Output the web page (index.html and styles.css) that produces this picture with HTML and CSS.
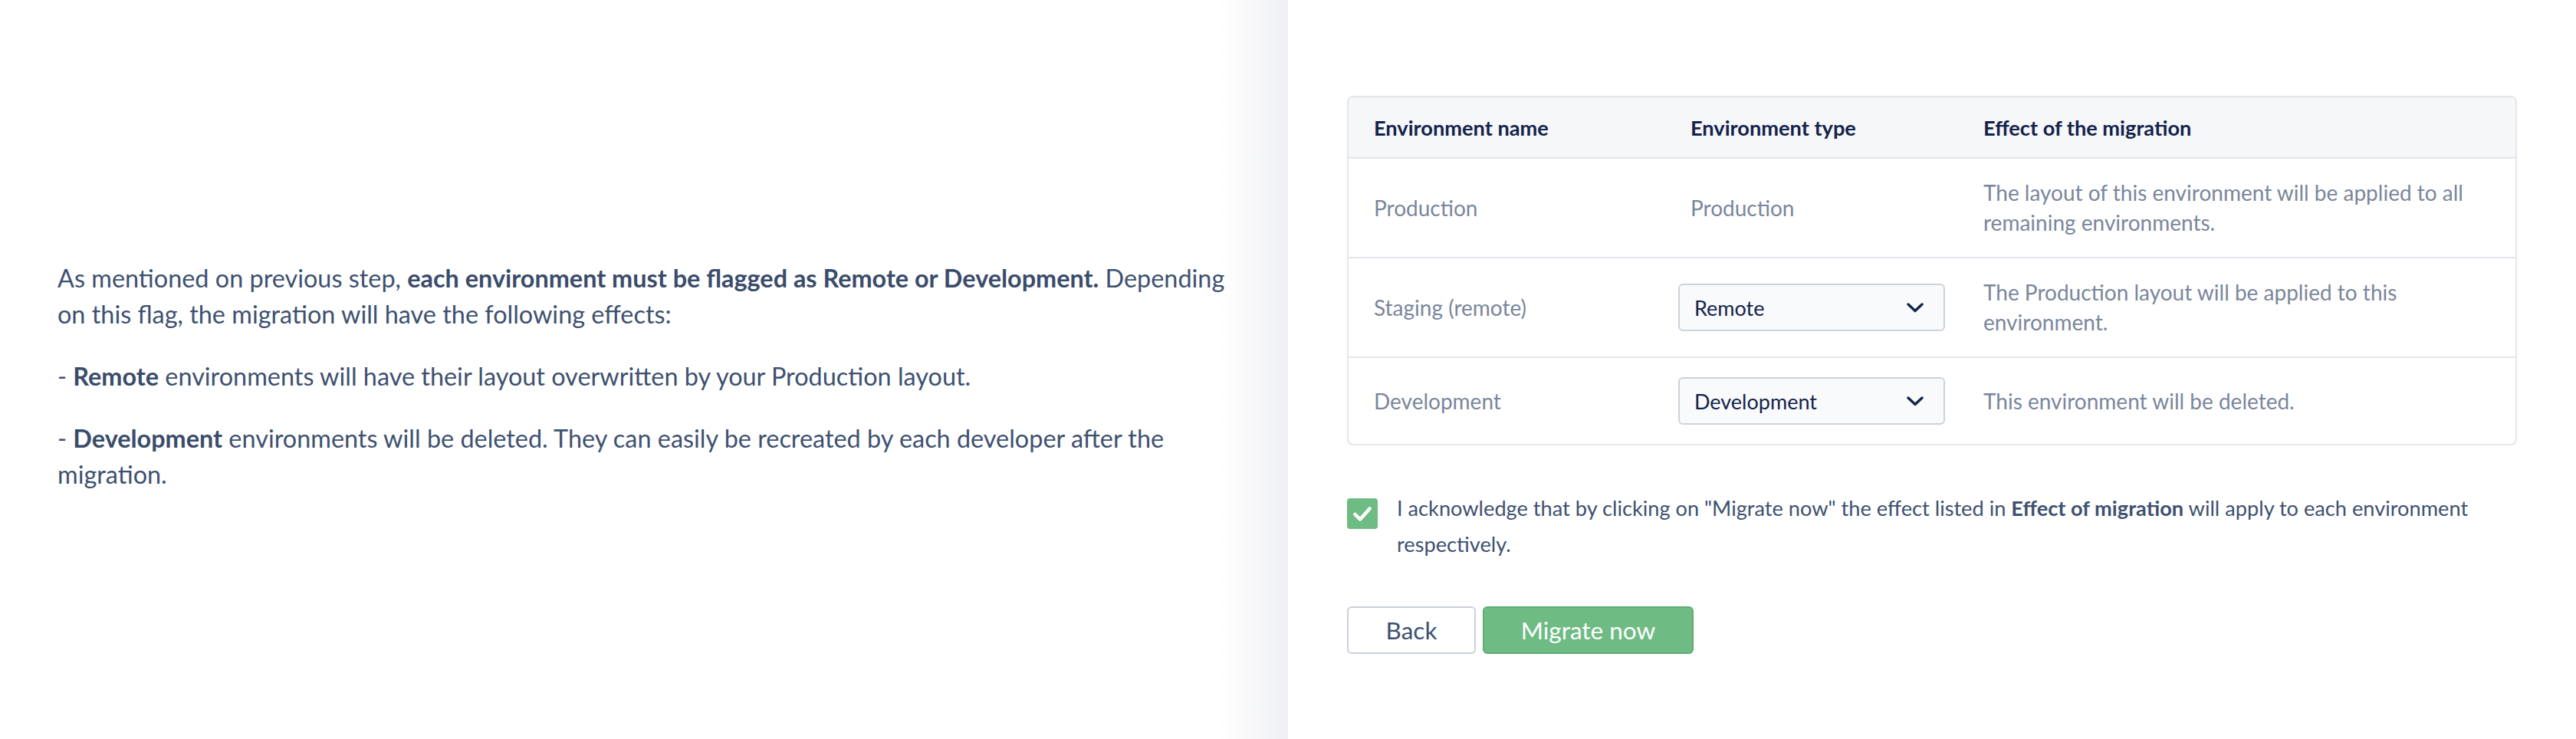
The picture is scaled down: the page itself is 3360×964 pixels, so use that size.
FILE: index.html
```html
<!DOCTYPE html>
<html lang="en">
<head>
<meta charset="utf-8">
<title>Migration</title>
<link rel="stylesheet" href="styles.css">
</head>
<body>
<div class="page">
  <section class="intro">
    <div class="intro-text">
      <p>As mentioned on previous step, <strong>each environment must be flagged as Remote or Development.</strong> Depending on this flag, the migration will have the following effects:</p>
      <p>- <strong>Remote</strong> environments will have their layout overwritten by your Production layout.</p>
      <p>- <strong>Development</strong> environments will be deleted. They can easily be recreated by each developer after the migration.</p>
    </div>
  </section>
  <section class="panel">
    <div class="table">
      <div class="row head">
        <div class="cell">Environment name</div>
        <div class="cell">Environment type</div>
        <div class="cell">Effect of the migration</div>
      </div>
      <div class="row">
        <div class="cell">Production</div>
        <div class="cell">Production</div>
        <div class="cell">The layout of this environment will be applied to all remaining environments.</div>
      </div>
      <div class="row">
        <div class="cell">Staging (remote)</div>
        <div class="cell">
          <div class="select"><span>Remote</span><svg class="chev" viewBox="0 0 22 13" width="22" height="13"><path d="M2 2 L11 10.5 L20 2" fill="none" stroke="#14254a" stroke-width="3.4" stroke-linecap="round" stroke-linejoin="round"/></svg></div>
        </div>
        <div class="cell">The Production layout will be applied to this environment.</div>
      </div>
      <div class="row">
        <div class="cell">Development</div>
        <div class="cell">
          <div class="select"><span>Development</span><svg class="chev" viewBox="0 0 22 13" width="22" height="13"><path d="M2 2 L11 10.5 L20 2" fill="none" stroke="#14254a" stroke-width="3.4" stroke-linecap="round" stroke-linejoin="round"/></svg></div>
        </div>
        <div class="cell">This environment will be deleted.</div>
      </div>
    </div>
    <div class="ack">
      <span class="checkbox"><svg viewBox="0 0 40 40" width="40" height="40"><path d="M10.5 21 L17 27.5 L29.5 13.5" fill="none" stroke="#ffffff" stroke-width="4.5" stroke-linecap="round" stroke-linejoin="round"/></svg></span>
      <p class="ack-text">I acknowledge that by clicking on "Migrate now" the effect listed in <strong>Effect of migration</strong> will apply to each environment respectively.</p>
    </div>
    <div class="actions">
      <button class="btn btn-back">Back</button>
      <button class="btn btn-primary">Migrate now</button>
    </div>
  </section>
</div>
</body>
</html>
```

FILE: styles.css
```css
* { box-sizing: border-box; }
html, body { margin: 0; padding: 0; background: #ffffff; }
body { font-family: "Lato", "Liberation Sans", sans-serif; color: #3e5170; }

.page {
  display: flex;
  width: 3360px;
  height: 964px;
}

.intro {
  width: 1680px;
  flex: none;
  display: flex;
  align-items: center;
  padding: 17px 70px 0 75px;
  background: linear-gradient(to right, #ffffff 0, #ffffff 1590px, #eff0f4 1680px);
}
.intro-text { width: 1535px; }
.intro-text p {
  margin: 0 0 34px;
  font-size: 32.4px;
  line-height: 47px;
  color: #3e5170;
}
.intro-text p:last-child { margin-bottom: 0; }
.intro-text strong { font-weight: 700; color: #3a4c6b; }

.panel {
  flex: 1;
  padding: 125px 77px 0 77px;
}

.table {
  border: 2px solid #e3e6eb;
  border-radius: 8px;
  overflow: hidden;
}
.row {
  display: grid;
  grid-template-columns: 413px 382px 1fr;
  align-items: center;
  padding: 25px 0;
  border-top: 2px solid #e3e6eb;
  font-size: 28px;
  line-height: 39px;
  color: #7a869c;
}
.row.head {
  border-top: 0;
  background: #f6f7f9;
  padding: 19px 0 19px;
  color: #13234a;
  font-weight: 700;
  height: 78px;
}
.row.head .cell { font-size: 27.2px; }
.cell { padding: 0 33px; }

.select {
  display: flex;
  align-items: center;
  justify-content: space-between;
  width: 348px;
  height: 62px;
  margin-left: -16px;
  padding: 0 26px 0 19px;
  border: 2px solid #cdd2db;
  border-radius: 6px;
  background: #f9fafb;
  color: #13234a;
  font-size: 27px;
}
.chev { display: block; }

.ack {
  display: flex;
  align-items: flex-start;
  gap: 25px;
  margin-top: 58px;
}
.checkbox {
  flex: none;
  width: 40px;
  height: 40px;
  margin-top: 11px;
  border-radius: 4px;
  background: #6fbb84;
  display: block;
}
.checkbox svg { display: block; }
.ack-text {
  margin: 0;
  font-size: 27.2px;
  line-height: 47px;
  color: #3e5170;
}
.ack-text strong { font-weight: 700; }

.actions {
  display: flex;
  gap: 9px;
  margin-top: 58px;
}
.btn {
  height: 62px;
  border-radius: 6px;
  font-family: "Lato", "Liberation Sans", sans-serif;
  font-size: 31.5px;
  padding: 0;
  cursor: pointer;
}
.btn-back {
  width: 168px;
  background: #ffffff;
  border: 2px solid #cbd0da;
  color: #3e5170;
}
.btn-primary {
  width: 275px;
  background: #6fbb84;
  border: 2px solid #5dac72;
  color: #ffffff;
}
```
